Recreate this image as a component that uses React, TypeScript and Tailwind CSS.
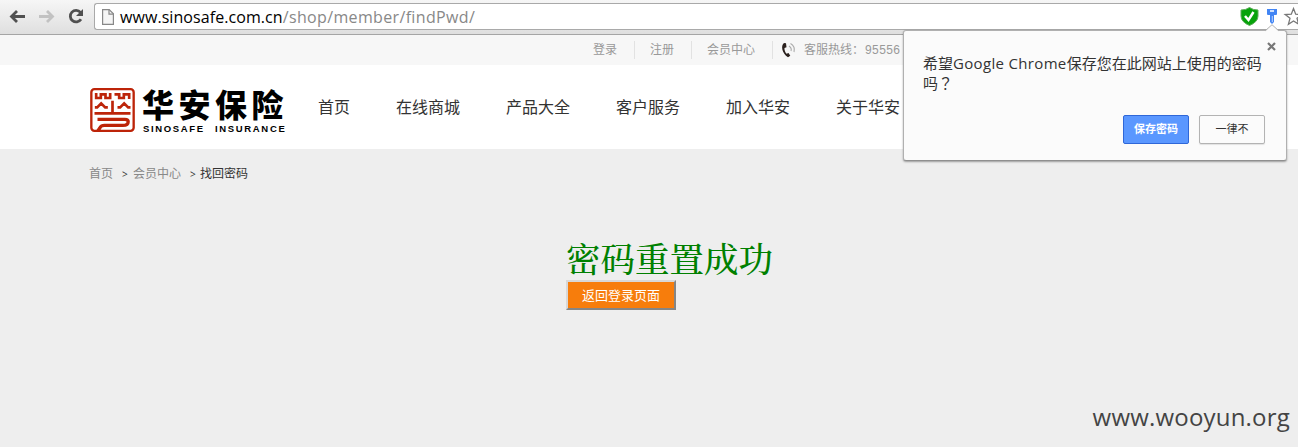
const sans = "font-['Open_Sans','Noto_Sans_CJK_SC',sans-serif]";
const nav = ['首页', '在线商城', '产品大全', '客户服务', '加入华安', '关于华安'];

function BrowserBar() {
  return (
    <div className="flex h-[35px] items-start border-b border-[#a5a5a5] bg-linear-to-b from-[#f6f6f6] to-[#dfdfdf]">
      <svg className="mt-[3px] h-[28px] w-[94px] shrink-0" viewBox="0 0 94 28" fill="none">
        <path d="M25 13.5H12M17 8l-5.5 5.5L17 19" stroke="#505050" strokeWidth="2.8" />
        <path d="M39 13.5h13M47 8l5.5 5.5L47 19" stroke="#c2c2c2" strokeWidth="2.8" />
        <path d="M80.5 9.3A5.8 5.8 0 1 0 81 16.3" stroke="#505050" strokeWidth="2.8" />
        <path d="M83 6v7h-7z" fill="#505050" />
      </svg>
      <div className="mt-[3px] flex h-[27px] flex-1 items-center rounded-l-[3px] border border-r-0 border-[#a9a9a9] bg-white">
        <svg className="ml-[7px] h-[16px] w-[12px] shrink-0" viewBox="0 0 12 16">
          <path d="M.6.6h6.6l4.2 4.2v10.6H.6z" fill="#f5f5f5" stroke="#888" strokeWidth="1.2" />
          <path d="M7 .6v4.6h4.6" fill="none" stroke="#888" strokeWidth="1.2" />
        </svg>
        <div className="ml-[6px] flex-1 text-[16px] leading-[24px] whitespace-nowrap text-[#888]">
          <span className="tracking-[0.07px] text-black">www.sinosafe.com.cn</span>
          <span className="tracking-[0.35px]">/shop/member/findPwd/</span>
        </div>
        <svg className="h-[25px] w-[60px] shrink-0" viewBox="0 0 60 25">
          <path d="M3 6Q8 6 11.500 3.500Q15 6 20 6V12Q20 18 11.500 21.500Q3 18 3 12Z" fill="#07a30b" stroke="#5cad59" />
          <path d="M7 12l3.500 4 5-8" fill="none" stroke="#fff" strokeWidth="2.500" />
          <path d="M29 5h10v5q0 1-1 1h-2v7l-2 2-2-2v-7h-2q-1 0-1-1z" fill="#4285f4" />
          <path d="M32 7h4" stroke="#fff" strokeWidth="1.500" />
          <path d="M34.300 12v6" stroke="#b9d3ff" />
          <path d="M55.500 4.500l2.200 5.700 6.100.3-4.800 3.800 1.600 5.900-5.100-3.300-5.100 3.300 1.600-5.900-4.800-3.800 6.100-.3z" fill="#fff" stroke="#777" strokeWidth="1.300" />
        </svg>
      </div>
    </div>
  );
}

function TopLinks() {
  return (
    <div className="flex h-[30px] items-center bg-[#f7f7f7] pl-[577px] text-[12px] leading-[18px] whitespace-nowrap text-[#999]">
      <span className="w-[58px] border-r border-[#e2e2e2] pl-4">登录</span>
      <span className="w-[57px] border-r border-[#e2e2e2] pl-[15px]">注册</span>
      <span className="w-[81px] border-r border-[#e2e2e2] pl-[15px]">会员中心</span>
      <svg className="ml-[7px] h-[18px] w-[18px]" viewBox="0 0 18 18" fill="none">
        <path d="M4 2C.500 4.500 2 12.500 8 16.300l2.300-1.500-1.800-2.800-2 .8C4.700 10.500 4.300 8.500 4.500 7l2-.8-.5-4z" fill="#2b211e" />
        <path d="M9 5q3 2 2 5M10.500 2.500q5 3 3.500 8.500" stroke="#aaa" strokeWidth="1.100" />
      </svg>
      <span className="ml-[6px]">客服热线：</span>
      <span className="ml-px font-['Liberation_Sans',sans-serif] tracking-[0.4px]">95556</span>
    </div>
  );
}

function Logo() {
  return (
    <div className="flex w-[197px] items-start">
      <svg className="h-[44px] w-[45px] shrink-0" viewBox="0 0 134 132" fill="none" stroke="#bd2409">
        <rect x="3.500" y="3.500" width="127" height="125" rx="9" strokeWidth="7" />
        <path d="M18 15v15h14V19h14v11h14V15M73 19h14v11h14V19h16v14" strokeWidth="8" />
        <path d="M14 58h7l12-12 12 12h8M82 58h8l12-12 12 12h7" strokeWidth="8" />
        <path d="M67 38v38M13 76h108" strokeWidth="8" />
        <path d="M22 94h82q10 0 10 7 0 11-16 11H43q-10 0-13 6l-7 11" strokeWidth="10" />
      </svg>
      <div className="ml-[7px] whitespace-nowrap text-black">
        <div className="h-[36px] font-['Noto_Sans_CJK_SC',sans-serif] text-[32px] leading-[31px] font-black tracking-[4.500px]">华安保险</div>
        <div className="pl-[1px] font-['Liberation_Sans',sans-serif] text-[9.500px] leading-[9px] font-bold tracking-[1.650px] [word-spacing:6px]">SINOSAFE INSURANCE</div>
      </div>
    </div>
  );
}

function PasswordBubble() {
  return (
    <div className="absolute top-[30px] left-[903px] h-[131px] w-[384px] rounded-[3px] border border-[#b0b0b0] border-b-[#8f8f8f] bg-[#fbfbfb] shadow-[0_1px_2px_rgba(0,0,0,0.35)]">
      <svg className="absolute -top-[7px] left-[360px] h-[8px] w-[16px]" viewBox="0 0 16 8">
        <path d="M1 7.500L8 .7l7 6.800V8H1z" fill="#fbfbfb" />
        <path d="M1 7L8 .7 15 7" fill="none" stroke="#b0b0b0" />
      </svg>
      <svg className="absolute top-[11px] left-[363px] h-[9px] w-[9px]" viewBox="0 0 9 9">
        <path d="M1 1l7 7M8 1L1 8" stroke="#777" strokeWidth="2.200" />
      </svg>
      <p className="pt-[22px] pl-[19px] text-[15px] leading-[20px] whitespace-nowrap text-[#333]">
        希望<span className="tracking-[0.33px]">Google Chrome</span>保存您在此网站上使用的密码<br />吗<span className="font-['Noto_Sans_CJK_TC',sans-serif]">？</span>
      </p>
      <div className="mt-[22px] flex gap-[10px] pl-[219px] text-[11px]">
        <button className="h-[29px] w-[66px] rounded-[2px] border border-[#2f67d8] bg-[#5a97ff] font-bold text-white">保存密码</button>
        <button className="h-[29px] w-[66px] rounded-[2px] border border-[#b3b3b3] bg-[#fbfbfb] text-[#333] shadow-[0_1px_1px_rgba(0,0,0,0.1)]">一律不</button>
      </div>
    </div>
  );
}

export default function App() {
  return (
    <div className={`relative flex h-[447px] w-[1298px] flex-col overflow-hidden bg-[#eee] ${sans}`}>
      <BrowserBar />
      <TopLinks />
      <header className="flex h-[84px] items-start bg-white pt-[23px] pl-[90px]">
        <Logo />
        <nav className="ml-[31px] flex gap-[46px] pt-[7px] text-[16px] leading-[24px] whitespace-nowrap text-[#333]">
          {nav.map((item) => (
            <a key={item}>{item}</a>
          ))}
        </nav>
      </header>
      <div className="flex h-[50px] items-center pl-[89px] text-[12px] whitespace-nowrap text-[#888]">
        <span className="w-[33px]">首页</span>
        <span className="w-[11px] text-[10px] text-[#333]">&gt;</span>
        <span className="w-[57px]">会员中心</span>
        <span className="w-[10px] text-[10px] text-[#333]">&gt;</span>
        <span className="text-[#333]">找回密码</span>
      </div>
      <main className="flex flex-1 flex-col items-start pt-[40px] pl-[566px]">
        <h1 className="h-[41px] font-['Liberation_Serif','Noto_Serif_CJK_SC',serif] text-[34.500px] leading-[43px] font-medium whitespace-nowrap text-[#008000]">密码重置成功</h1>
        <button className="h-[30px] w-[110px] border-2 border-t-[#d8d8d8] border-r-[#858585] border-b-[#858585] border-l-[#d8d8d8] bg-[#f77d0c] text-[13px] leading-[24px] text-white">返回登录页面</button>
      </main>
      <div className="self-end pr-[8px] pb-[14px] text-[24px] leading-[33px] tracking-[0.2px] text-[#444]">www.wooyun.org</div>
      <PasswordBubble />
    </div>
  );
}
